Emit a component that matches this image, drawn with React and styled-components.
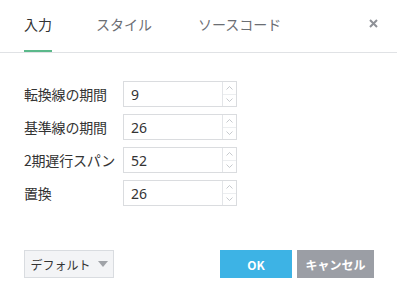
import React, { useState } from "react";
import styled, { createGlobalStyle } from "styled-components";

const Global = createGlobalStyle`
    body {
        margin: 0;
        background: #fff;
        font-family: "Noto Sans CJK JP", "Noto Sans", sans-serif;
    }
`;

const Dialog = styled.div`
    width: 397px;
    height: 303px;
    display: flex;
    flex-direction: column;
    box-sizing: border-box;
`;

const Header = styled.div`
    height: 53px;
    box-sizing: border-box;
    border-bottom: 1px solid #e0e2e5;
    display: flex;
    align-items: stretch;
    padding: 0 19px 0 24px;
`;

const Tab = styled.div`
    font-size: 14px;
    color: ${p => (p.active ? "#333" : "#6b6e73")};
    margin-right: ${p => p.gap}px;
    display: flex;
    align-items: center;
    padding-bottom: 3px;
    box-sizing: border-box;
    border-bottom: 2px solid ${p => (p.active ? "#5bb98b" : "transparent")};
    cursor: pointer;
`;

const Close = styled.div`
    margin-left: auto;
    display: flex;
    align-items: center;
    padding-bottom: 5px;
    color: #8e9197;
`;

const Form = styled.div`
    flex: 1;
    padding: 28px 24px 0;
    display: flex;
    flex-direction: column;
    gap: 7px;
`;

const Row = styled.div`
    display: flex;
    align-items: center;
    height: 26px;
`;

const Label = styled.div`
    width: 99px;
    font-size: 14px;
    letter-spacing: -0.2px;
    color: #333;
    white-space: nowrap;
`;

const Field = styled.div`
    width: 114px;
    height: 26px;
    box-sizing: border-box;
    border: 1px solid #dadcdf;
    display: flex;
`;

const Input = styled.input`
    flex: 1;
    min-width: 0;
    border: 0;
    outline: 0;
    padding: 0 0 0 7px;
    font-family: "Noto Sans", sans-serif;
    font-size: 14px;
    color: #333;
`;

const Spin = styled.div`
    width: 13px;
    border-left: 1px solid #e3e5e8;
    display: flex;
    flex-direction: column;
`;

const SpinHalf = styled.div`
    flex: 1;
    display: flex;
    align-items: center;
    justify-content: center;
    border-top: ${p => (p.bottom ? "1px solid #eceef0" : "0")};
`;

const Footer = styled.div`
    display: flex;
    align-items: center;
    padding: 0 23px 25px 24px;
    gap: 5px;
`;

const DefaultButton = styled.button`
    width: 90px;
    height: 28px;
    box-sizing: border-box;
    background: #f3f4f6;
    border: 1px solid #d9dce0;
    font-family: inherit;
    font-size: 12px;
    color: #333;
    display: flex;
    align-items: center;
    justify-content: center;
    gap: 7px;
    padding: 0;
    margin-right: auto;
    cursor: pointer;
`;

const Caret = styled.span`
    width: 0;
    height: 0;
    border-left: 5px solid transparent;
    border-right: 5px solid transparent;
    border-top: 6px solid #a0a3a8;
`;

const Button = styled.button`
    width: ${p => p.w}px;
    height: 28px;
    border: 0;
    background: ${p => p.bg};
    color: #fff;
    font-family: inherit;
    font-size: 12px;
    font-weight: bold;
    padding: 0;
    cursor: pointer;
`;

const Chevron = ({ up }) => (
    <svg width="7" height="4" viewBox="0 0 7 4">
        <path d={up ? "M0.5 3.5 L3.5 0.5 L6.5 3.5" : "M0.5 0.5 L3.5 3.5 L6.5 0.5"} fill="none" stroke="#b9bcc1" strokeWidth="0.8" />
    </svg>
);

const rows = [
    { label: "転換線の期間", value: "9" },
    { label: "基準線の期間", value: "26" },
    { label: "2期遅行スパン", value: "52" },
    { label: "置換", value: "26" },
];

const App = () => {
    const [values, setValues] = useState(rows.map(r => r.value));

    const change = (i, v) => {
        const next = [...values];
        next[i] = v;
        setValues(next);
    };

    return (
        <Dialog>
            <Global />
            <Header>
                <Tab active gap={44}>入力</Tab>
                <Tab gap={46}>スタイル</Tab>
                <Tab gap={0}>ソースコード</Tab>
                <Close>
                    <svg width="9" height="9" viewBox="0 0 9 9">
                        <path d="M1 1 L8 8 M8 1 L1 8" stroke="#8e9197" strokeWidth="2" />
                    </svg>
                </Close>
            </Header>
            <Form>
                {rows.map((r, i) => (
                    <Row key={r.label}>
                        <Label>{r.label}</Label>
                        <Field>
                            <Input value={values[i]} onChange={e => change(i, e.target.value)} />
                            <Spin>
                                <SpinHalf><Chevron up /></SpinHalf>
                                <SpinHalf bottom><Chevron /></SpinHalf>
                            </Spin>
                        </Field>
                    </Row>
                ))}
            </Form>
            <Footer>
                <DefaultButton>デフォルト<Caret /></DefaultButton>
                <Button w={72} bg="#3db3e5">OK</Button>
                <Button w={77} bg="#9b9ea5">キャンセル</Button>
            </Footer>
        </Dialog>
    );
};

export default App;
